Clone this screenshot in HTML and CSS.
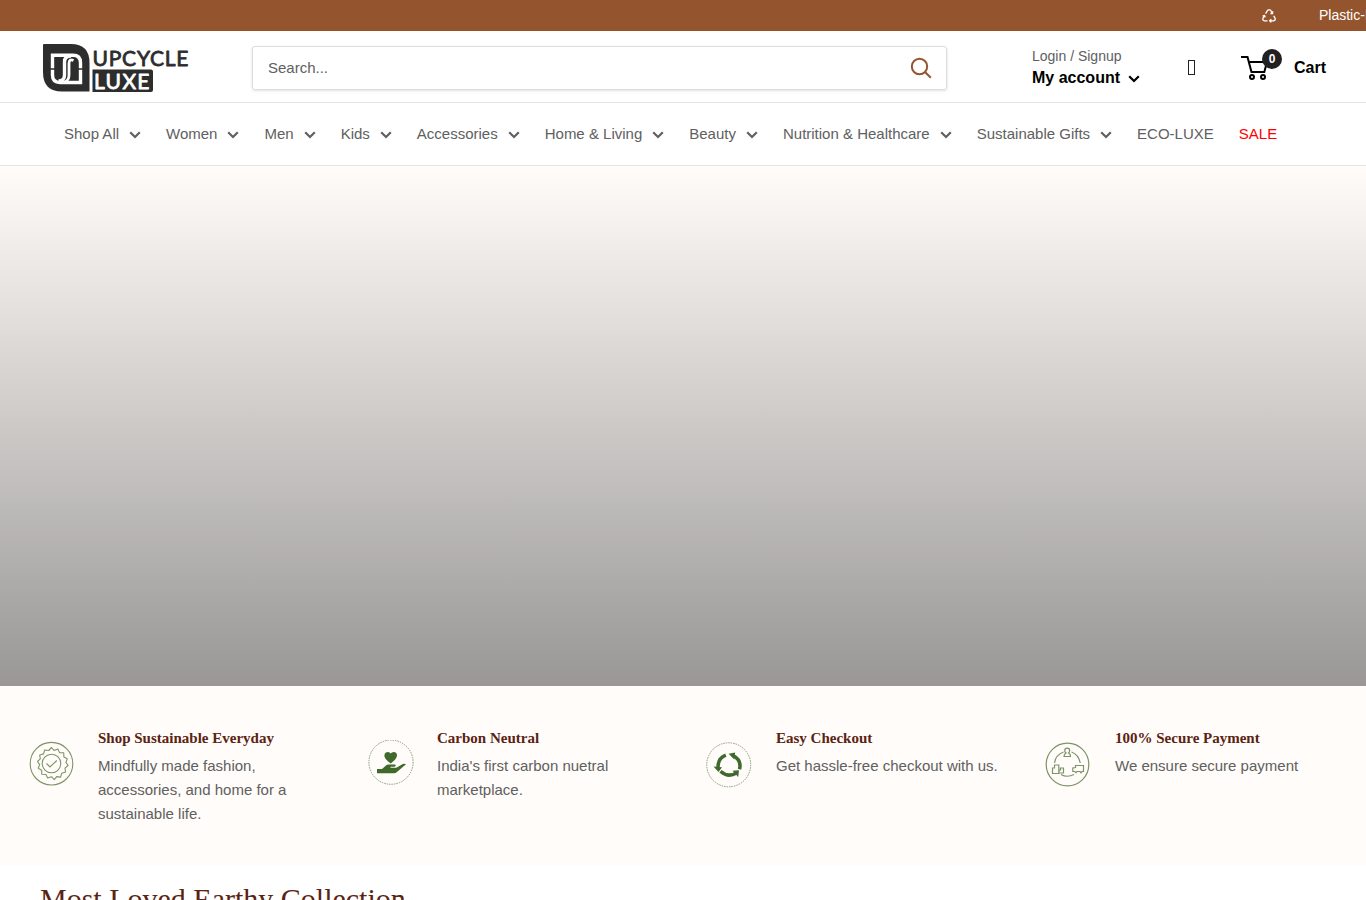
FILE: index.html
```html
<!DOCTYPE html>
<html lang="en">
  <head>
    <meta charset="UTF-8" />
    <meta name="viewport" content="width=device-width, initial-scale=1.0" />
    <title>Upcycle Luxe</title>
    <link rel="stylesheet" href="styles.css">
  </head>
  <body>
    <svg class="sprite" aria-hidden="true">
      <symbol id="chevron" viewBox="0 0 12 8">
        <path d="M1.200 1.200 6 6l4.800-4.800" fill="none" stroke="currentColor" stroke-width="2.200" />
      </symbol>
    </svg>

    <div class="announcement">
      <svg class="recycle" viewBox="0 0 14 14">
        <g fill="none" stroke="currentColor" stroke-width="1.300" stroke-linejoin="round">
          <path d="M3.600 4.600 5.400 1.600Q5.800.8 6.600.8h1.100q.7 0 1.100.7l1.500 2.600M10.600 2.300v2.200H8.400" />
          <path d="M11.700 6.700l1.300 2.400q.9 2.300-1.500 2.700H7.800M9.300 10.100l-1.700 1.700 1.700 1.600" />
          <path d="M5.500 11.800H2.500Q.2 11.400 1 9.200L2.500 6.700M.6 7l2-.6.6 2" />
        </g>
      </svg>
      <span>Plastic-Free Packaging</span>
    </div>

    <header class="header">
      <a href="#" class="logo">
        <svg width="148" height="50" viewBox="0 0 148 50">
          <path d="M2 1h27q18.500 0 18.500 19v28.500H20Q1 48.500 1 29V2q0-1 1-1z" fill="#2d2d2d" />
          <g fill="none" stroke="#fff" stroke-width="3.400">
            <path d="M10.500 12.300H31q7.500 0 7.500 7.500v19.700H18q-7.500 0-7.500-7.500z" />
            <path d="M29 13q-6.500 0-6.500 6V32q0 6-6 6" />
            <path d="M31.500 17.500q-4.500-2-4.500 3V32q0 5-4 7" stroke-width="2.800" />
          </g>
          <path d="M7 26h8M34 26h8" stroke="#2d2d2d" stroke-width="1.500" />
          <path d="M50.500 26.500H109q2 0 2 2V47q0 2-2 2H50.500z" fill="#2d2d2d" />
          <text class="logo-top" x="50.500" y="23" textLength="96" lengthAdjust="spacing">UPCYCLE</text>
          <text class="logo-bottom" x="52" y="46" textLength="55.500" lengthAdjust="spacing">LUXE</text>
        </svg>
      </a>

      <form class="search">
        <input type="text" placeholder="Search..." />
        <svg width="22" height="22" viewBox="0 0 22 22" fill="none" stroke="#94552e" stroke-width="2">
          <circle cx="9.500" cy="9.500" r="7.700" />
          <path d="m15 15 5.800 5.800" />
        </svg>
      </form>

      <div class="account">
        <span class="login">Login / Signup</span>
        <a href="#" class="my-account">My account <svg class="chevron"><use href="#chevron" /></svg></a>
      </div>

      <span class="wishlist"></span>

      <a href="#" class="cart">
        <span class="cart-icon">
          <svg width="27" height="24" viewBox="0 0 27 24" fill="none" stroke="#000" stroke-width="2">
            <path d="M0 1h6.500l4 15h12.800L26 6H8" />
            <circle cx="11" cy="21" r="2" />
            <circle cx="22" cy="21" r="2" />
          </svg>
          <span class="cart-count">0</span>
        </span>
        Cart
      </a>
    </header>

    <nav class="nav">
      <a href="#">Shop All <svg class="chevron"><use href="#chevron" /></svg></a>
      <a href="#">Women <svg class="chevron"><use href="#chevron" /></svg></a>
      <a href="#">Men <svg class="chevron"><use href="#chevron" /></svg></a>
      <a href="#">Kids <svg class="chevron"><use href="#chevron" /></svg></a>
      <a href="#">Accessories <svg class="chevron"><use href="#chevron" /></svg></a>
      <a href="#">Home &amp; Living <svg class="chevron"><use href="#chevron" /></svg></a>
      <a href="#">Beauty <svg class="chevron"><use href="#chevron" /></svg></a>
      <a href="#">Nutrition &amp; Healthcare <svg class="chevron"><use href="#chevron" /></svg></a>
      <a href="#">Sustainable Gifts <svg class="chevron"><use href="#chevron" /></svg></a>
      <a href="#">ECO-LUXE</a>
      <a href="#" class="sale">SALE</a>
    </nav>

    <div class="slideshow"></div>

    <section class="features">
      <div class="feature">
        <svg class="feature-icon" viewBox="0 0 48 48" fill="none" stroke="#7d9468" stroke-width="1.100">
          <circle cx="23.500" cy="23.700" r="21.300" />
          <circle cx="23.500" cy="23.500" r="9.300" />
          <path d="M23.500 7.500l2.600 2.900 3.800-1.400 1.600 3.600 4.200.2.200 4.200 3.400 1.700-1.400 3.700 2.200 3.100-3.100 2.600.6 3.900-3.900 1.200-1.100 3.900-3.900-.5-2.500 3-2.700-2.900-3.800 1.300-1.800-3.500-4.100-.2-.1-4.100-3.500-1.900 1.500-3.700-2.200-3.100 2.800-2.600-.6-3.900 3.900-1.100 1.100-3.900 4 .5z" stroke-linejoin="round" />
          <path d="m18.500 23.500 3.500 3.500 6.800-6.500" />
        </svg>
        <div>
          <h3>Shop Sustainable Everyday</h3>
          <p>Mindfully made fashion, accessories, and home for a sustainable life.</p>
        </div>
      </div>
      <div class="feature">
        <svg class="feature-icon" viewBox="0 0 48 48">
          <circle cx="24" cy="22.200" r="22.100" fill="none" stroke="#8b9b7c" stroke-dasharray="1.500 1" />
          <g fill="#3f6a2c">
            <path d="M23.700 23.500q-7-5-6.300-8.500.6-3 3.500-3 2 0 2.800 1.500 1-1.500 3-1.500 3 0 3.300 3 .4 3.500-6.300 8.500z" />
            <path d="M10 29h5l4-3.600q1-.8 2.500-.8h6q1.200 0 1.200 1t-1.200 1.200h-4v1h5.800l6.500-3.700q2-.8 3.200.2l-8.800 7.500q-1.500 1.500-3.500 1.500H10z" />
          </g>
        </svg>
        <div>
          <h3>Carbon Neutral</h3>
          <p>India's first carbon nuetral marketplace.</p>
        </div>
      </div>
      <div class="feature">
        <svg class="feature-icon" viewBox="0 0 48 48">
          <circle cx="22.700" cy="24.800" r="22" fill="none" stroke="#8b9b7c" stroke-dasharray="1.500 1" />
          <g fill="none" stroke="#3f6a2c" stroke-width="3.500">
            <path d="M19.800 15.200Q12 18.200 12 27" />
            <path d="M27.500 15.800Q35.800 20.500 33.500 29.300" />
            <path d="M14.500 31.200Q22 38 30.500 33" />
          </g>
          <path d="m7.500 26.500 8.500.8-3.500 4.800zM22.600 13.700l6.500-1.300-.8 7zM26.500 30.800l6.500-.5-.8 6.700z" fill="#3f6a2c" />
        </svg>
        <div>
          <h3>Easy Checkout</h3>
          <p>Get hassle-free checkout with us.</p>
        </div>
      </div>
      <div class="feature">
        <svg class="feature-icon" viewBox="0 0 48 48" fill="none" stroke="#7d9468" stroke-width="1.200">
          <circle cx="22.500" cy="24.500" r="21.300" />
          <path d="M9.500 23q1-8 9-11M26.500 12q7 2.500 8.800 11M16 34.500q6 3.500 13 0" />
          <path d="M19 16.500q0-2.500 2-3.500-1.300-1-1.300-2.500 0-2.300 2.500-2.300t2.500 2.300q0 1.500-1.200 2.500 2.200 1 2 3.500z" />
          <path d="M9.500 25h4.300v8.500H7.500v-5.500h2zM14 33v-3h1.500v-2h3v5zM30.500 25.500h8v6H37l-1 1.200-1-1.200h-3l-1 1.200-1.200-1.200h-2V28l2.700-.5z" />
        </svg>
        <div>
          <h3>100% Secure Payment</h3>
          <p>We ensure secure payment</p>
        </div>
      </div>
    </section>

    <section class="collection">
      <h2>Most Loved Earthy Collection</h2>
    </section>
  </body>
</html>
```
FILE: styles.css
```css
* {
  margin: 0;
  padding: 0;
  box-sizing: border-box;
}
body {
  height: 900px;
  overflow: hidden;
  font-family: "Liberation Sans", Arial, sans-serif;
  font-size: 15px;
  color: #606060;
  background: #fff;
}
a {
  color: inherit;
  text-decoration: none;
}
svg {
  display: block;
  flex-shrink: 0;
}
.sprite {
  display: none;
}
.chevron {
  width: 12px;
  height: 8px;
}
.announcement {
  height: 31px;
  padding-left: 1262px;
  display: flex;
  align-items: center;
  gap: 43px;
  overflow: hidden;
  white-space: nowrap;
  font-size: 14px;
  color: #fff;
  background: #94552e;
}
.announcement span {
  padding-bottom: 1px;
}
.recycle {
  width: 14px;
  height: 14px;
  margin-top: 1px;
}
.header {
  height: 72px;
  padding: 0 40px 0 42px;
  display: flex;
  align-items: center;
  border-bottom: 1px solid #e1e3e4;
}
.logo {
  width: 148px;
  margin: 2px 62px 0 0;
}
.logo-top,
.logo-bottom {
  font-family: Lato, sans-serif;
  font-size: 21px;
  fill: #2d2d2d;
  stroke: #2d2d2d;
  stroke-width: 0.8px;
  stroke-linejoin: round;
}
.logo-bottom {
  fill: #fff;
  stroke: #fff;
}
.search {
  width: 695px;
  height: 44px;
  margin-top: 2px;
  padding: 0 14px 0 15px;
  display: flex;
  align-items: center;
  border: 1px solid #dadcdd;
  border-radius: 3px;
  box-shadow: 0 1px 3px rgba(0, 0, 0, 0.12);
}
.search input {
  flex: 1;
  border: none;
  outline: none;
  background: transparent;
  font: inherit;
}
.search input::placeholder {
  color: #606060;
}
.account {
  width: 108px;
  margin: 2px 0 0 85px;
  white-space: nowrap;
}
.login {
  display: block;
  font-size: 14px;
  line-height: 20px;
}
.my-account {
  display: flex;
  align-items: center;
  gap: 8px;
  font-size: 16px;
  font-weight: bold;
  line-height: 24px;
  color: #000;
}
.my-account .chevron {
  margin-top: 3px;
}
.wishlist {
  width: 7px;
  height: 15px;
  margin: 2px 0 0 48px;
  border: 1px solid #222;
}
.cart {
  margin: 2px 0 0 auto;
  display: flex;
  align-items: center;
  gap: 26px;
  font-size: 16px;
  font-weight: bold;
  color: #000;
}
.cart-icon {
  position: relative;
}
.cart-count {
  position: absolute;
  top: -7px;
  left: 21px;
  width: 20px;
  height: 20px;
  border-radius: 50%;
  font-size: 12px;
  line-height: 20px;
  text-align: center;
  color: #fff;
  background: #222021;
}
.nav {
  height: 63px;
  padding: 0 0 2px 64px;
  display: flex;
  align-items: center;
  gap: 25px;
  white-space: nowrap;
  border-bottom: 1px solid #e1e3e4;
}
.nav a {
  display: flex;
  align-items: center;
  gap: 10px;
}
.nav .chevron {
  margin-top: 3px;
}
.nav .sale {
  color: #ff0000;
}
.slideshow {
  height: 520px;
  background: linear-gradient(rgba(0, 0, 0, 0), rgba(0, 0, 0, 0.4)), #fffcf9;
}
.features {
  height: 180px;
  padding: 40px 0 0 28px;
  display: grid;
  grid-template-columns: repeat(4, 339px);
  background: #fffcf9;
}
.feature {
  display: flex;
  gap: 22px;
}
.feature-icon {
  width: 48px;
  height: 48px;
  margin-top: 14px;
}
.feature h3 {
  font-family: "Liberation Serif", serif;
  font-size: 15px;
  line-height: 24px;
  color: #5a2312;
}
.feature p {
  width: 228px;
  margin-top: 4px;
  line-height: 24px;
}
.collection {
  padding: 13px 40px;
}
.collection h2 {
  font-family: "Liberation Serif", serif;
  font-size: 30px;
  font-weight: normal;
  line-height: 40px;
  color: #5a2312;
}
```
